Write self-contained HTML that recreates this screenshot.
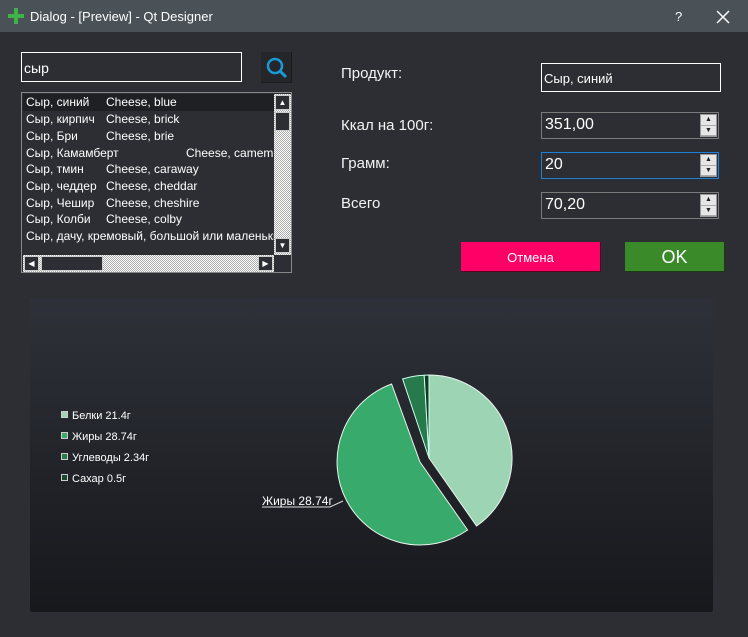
<!DOCTYPE html><html><head><meta charset="utf-8"><style>
*{box-sizing:border-box;margin:0;padding:0}
body{width:748px;height:637px;background:#2d2e33;font-family:"Liberation Sans","DejaVu Sans",sans-serif;color:#fff;position:relative;overflow:hidden}
.a{position:absolute}
.title{left:0;top:0;width:748px;height:32px;background:#4a5257;font-size:13px}
.lbl{font-size:15px;color:#f2f2f2}
.spin{border:1px solid #7a7a7a;background:#2d2e33;font-size:16px;padding:3px 0 0 3px;height:27px;width:178px}
.sb{position:absolute;right:1px;top:1px;width:17px;height:23px;background:#e6e6e6;border:1px solid #999}
.sb i{display:block;height:50%;border-bottom:1px solid #aaa;font-style:normal;color:#222;font-size:7px;text-align:center;line-height:10px}
.row{position:absolute;left:27px;font-size:12px;white-space:nowrap;height:17px;line-height:17px}
.chk{background-image:repeating-conic-gradient(#fff 0 25%,#aaa 0 50%);background-size:2px 2px}
</style></head><body>
<div class="a title">
<div class="a" style="left:8px;top:14px;width:16px;height:4px;background:#3db34a"></div>
<div class="a" style="left:14px;top:8px;width:4px;height:16px;background:#3db34a"></div>
<div class="a" style="left:30px;top:9px">Dialog - [Preview] - Qt Designer</div>
<div class="a" style="left:675px;top:9px">?</div>
<svg class="a" style="left:716px;top:10px" width="14" height="14"><path d="M1,1 L13,13 M13,1 L1,13" stroke="#fff" stroke-width="1.5"/></svg>
</div>
<div class="a" style="left:21px;top:52px;width:221px;height:30px;border:1px solid #fff;font-size:14px;padding:7px 0 0 2px">сыр</div>
<div class="a" style="left:261px;top:52px;width:31px;height:31px;background:#25262a;border-right:1px solid #1a1a1a;border-bottom:1px solid #1a1a1a">
<svg width="31" height="31"><circle cx="14" cy="14" r="7" stroke="#1a9ad6" stroke-width="2.5" fill="none"/><line x1="19" y1="19" x2="25" y2="25" stroke="#1a9ad6" stroke-width="3"/></svg></div>
<div class="a" style="left:21px;top:92px;width:271px;height:181px;border:1px solid #888;overflow:hidden">
<div class="a" style="left:1px;top:1px;width:251px;height:17px;background:#1f2024"></div>
<div class="row" style="left:4px;top:1px">Сыр, синий</div><div class="row" style="left:84px;top:1px">Cheese, blue</div>
<div class="row" style="left:4px;top:18px">Сыр, кирпич</div><div class="row" style="left:84px;top:18px">Cheese, brick</div>
<div class="row" style="left:4px;top:35px">Сыр, Бри</div><div class="row" style="left:84px;top:35px">Cheese, brie</div>
<div class="row" style="left:4px;top:52px">Сыр, Камамберт</div><div class="row" style="left:164px;top:52px">Cheese, camembert</div>
<div class="row" style="left:4px;top:68px">Сыр, тмин</div><div class="row" style="left:84px;top:68px">Cheese, caraway</div>
<div class="row" style="left:4px;top:85px">Сыр, чеддер</div><div class="row" style="left:84px;top:85px">Cheese, cheddar</div>
<div class="row" style="left:4px;top:102px">Сыр, Чешир</div><div class="row" style="left:84px;top:102px">Cheese, cheshire</div>
<div class="row" style="left:4px;top:118px">Сыр, Колби</div><div class="row" style="left:84px;top:118px">Cheese, colby</div>
<div class="row" style="left:4px;top:135px">Сыр, дачу, кремовый, большой или маленький</div>
<div class="a chk" style="left:252px;top:1px;width:17px;height:161px"></div>
<div class="a" style="left:253px;top:2px;width:15px;height:15px;background:#2d2e33;border:1px solid #ccc;font-size:8px;text-align:center;line-height:13px">▲</div>
<div class="a" style="left:253px;top:19px;width:15px;height:19px;background:#2d2e33;border:1px solid #ccc"></div>
<div class="a" style="left:253px;top:145px;width:15px;height:15px;background:#2d2e33;border:1px solid #ccc;font-size:8px;text-align:center;line-height:13px">▼</div>
<div class="a chk" style="left:1px;top:162px;width:251px;height:17px"></div>
<div class="a" style="left:2px;top:163px;width:15px;height:15px;background:#2d2e33;border:1px solid #ccc;font-size:8px;text-align:center;line-height:13px">◀</div>
<div class="a" style="left:19px;top:163px;width:62px;height:15px;background:#2d2e33;border:1px solid #ccc"></div>
<div class="a" style="left:236px;top:163px;width:15px;height:15px;background:#2d2e33;border:1px solid #ccc;font-size:8px;text-align:center;line-height:13px">▶</div>
</div>
<div class="a lbl" style="left:341px;top:65px">Продукт:</div>
<div class="a lbl" style="left:341px;top:117px">Ккал на 100г:</div>
<div class="a lbl" style="left:341px;top:155px">Грамм:</div>
<div class="a lbl" style="left:341px;top:195px">Всего</div>
<div class="a" style="left:541px;top:63px;width:180px;height:29px;border:1px solid #fff;font-size:13px;padding:7px 0 0 2px">Сыр, синий</div>
<div class="a spin" style="left:541px;top:112px">351,00<div class="sb"><i>▲</i><i>▼</i></div></div>
<div class="a spin" style="left:541px;top:152px;border-color:#1e7fd6">20<div class="sb"><i>▲</i><i>▼</i></div></div>
<div class="a spin" style="left:541px;top:192px">70,20<div class="sb"><i>▲</i><i>▼</i></div></div>
<div class="a" style="left:461px;top:242px;width:140px;height:30px;background:#ff0066;border-right:1px solid #5a0020;border-bottom:1px solid #5a0020;font-size:13px;text-align:center;line-height:31px">Отмена</div>
<div class="a" style="left:625px;top:242px;width:100px;height:30px;background:#3a8a2a;border-right:1px solid #1a3a12;border-bottom:1px solid #1a3a12;font-size:18px;text-align:center;line-height:31px">OK</div>
<div class="a" style="left:30px;top:298px;width:683px;height:314px;background:linear-gradient(#2e3139,#17181c);border-radius:2px"></div>
<svg class="a" style="left:0;top:0" width="748" height="637">
<path d="M429,458 L429,375 A83,83 0 0 1 476.6,526 Z" fill="#9dd5b4" stroke="#e8f5ee" stroke-width="1"/>
<path d="M420,462 L467.6,530 A83,83 0 1 1 391.6,384 Z" fill="#38ab6c" stroke="#e8f5ee" stroke-width="1"/>
<path d="M429,458 L402.6,379 A83,83 0 0 1 424.2,375.2 Z" fill="#277a4c" stroke="#cfe" stroke-width="1"/>
<path d="M429,458 L424.2,375.2 A83,83 0 0 1 429,375 Z" fill="#0f3a22" stroke="#cfe" stroke-width="1"/>
<polyline points="262,507 330,507 343,501" fill="none" stroke="#ddd" stroke-width="1"/>
<text x="262" y="505" fill="#fff" font-size="12" font-family="Liberation Sans, sans-serif">Жиры 28.74г</text>
<g font-size="11" fill="#fff" font-family="Liberation Sans, sans-serif">
<rect x="61.5" y="411.5" width="6" height="6" fill="#9dd5b4" stroke="#ccc"/><text x="72" y="419">Белки 21.4г</text>
<rect x="61.5" y="432.5" width="6" height="6" fill="#38ab6c" stroke="#ccc"/><text x="72" y="440">Жиры 28.74г</text>
<rect x="61.5" y="453.5" width="6" height="6" fill="#277a4c" stroke="#ccc"/><text x="72" y="461">Углеводы 2.34г</text>
<rect x="61.5" y="474.5" width="6" height="6" fill="#1a4a30" stroke="#ccc"/><text x="72" y="482">Сахар 0.5г</text>
</g></svg>
</body></html>
